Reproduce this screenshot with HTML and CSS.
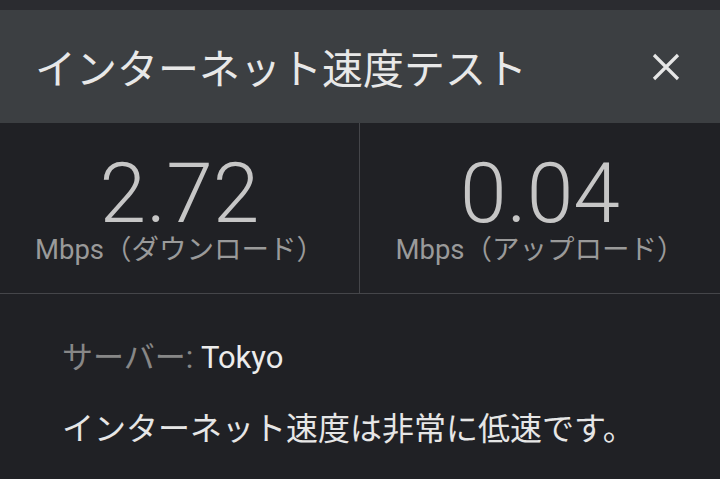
FILE: index.html
```html
<!DOCTYPE html>
<html lang="ja">
<head>
	<meta charset="UTF-8">
	<title>インターネット速度テスト</title>
	<link rel="stylesheet" href="styles.css">
</head>
<body>
	<div class="topbar"></div>

	<!-- ヘッダー -->
	<div class="header">
		<h1 class="title">インターネット速度テスト</h1>
		<button class="close" aria-label="閉じる">
			<svg width="28" height="28" viewBox="0 0 28 28">
				<path d="M2 2 L26 26 M26 2 L2 26" stroke="#e6e6e6" stroke-width="3.2" fill="none"/>
			</svg>
		</button>
	</div>

	<!-- 結果 -->
	<div class="stats">
		<div class="stat">
			<div class="num">2.72</div>
			<div class="unit">Mbps（ダウンロード）</div>
		</div>
		<div class="stat">
			<div class="num">0.04</div>
			<div class="unit">Mbps（アップロード）</div>
		</div>
	</div>

	<!-- 説明 -->
	<div class="info">
		<p class="server"><span class="label">サーバー:</span> Tokyo</p>
		<p class="note">インターネット速度は非常に低速です。</p>
	</div>
</body>
</html>
```

FILE: styles.css
```css
*{margin:0;padding:0;box-sizing:border-box;}
html,body{height:100%;}
body{background:#202125;font-family:Roboto,"Noto Sans CJK JP",sans-serif;color:#e6e6e6;overflow:hidden;}

.topbar{height:10px;background:#2b2c30;}

/*ヘッダー*/
.header{height:113px;background:#3c3f42;display:flex;align-items:center;justify-content:space-between;padding:0 40px 0 35px;}
.title{font-size:41px;font-weight:400;line-height:1;color:#e8e8e8;font-family:"Noto Sans CJK JP",sans-serif;}
.close{background:none;border:0;width:28px;height:28px;display:block;}
.close svg{display:block;}

/*結果*/
.stats{display:grid;grid-template-columns:1fr 1fr;height:171px;border-bottom:1px solid #45464a;}
.stat{display:flex;flex-direction:column;align-items:center;padding-top:29px;}
.stat:first-child{border-right:1px solid #45464a;}
.num{font-size:84px;font-weight:300;line-height:84px;color:#c6c6c6;}
.unit{font-size:27.5px;line-height:27px;color:#9a9a9a;}

/*説明*/
.info{padding:44px 62px 0;}
.server{font-size:31px;line-height:40px;color:#ececec;}
.server .label{color:#878787;}
.note{font-size:32px;line-height:40px;margin-top:28px;color:#e6e6e6;font-family:"Noto Sans CJK JP",sans-serif;}
```
